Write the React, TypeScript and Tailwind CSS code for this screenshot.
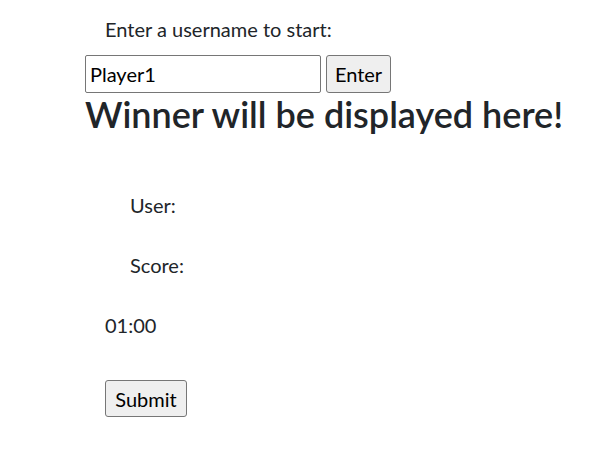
import React from "react";

export default function App() {
  const font = { fontFamily: 'Lato, "Noto Sans", sans-serif' };
  return (
    <div className="min-h-[473px] w-[608px] bg-white text-[#212529] pl-[85px]" style={font}>
      <p className="pl-[20px] pt-[14px] text-[20px] leading-[30px]">Enter a username to start:</p>
      <div className="mt-[11px] flex items-center gap-[5px]">
        <input
          defaultValue="Player1"
          className="h-[38px] w-[236px] rounded-[2px] border border-[#767676] bg-white px-[4px] text-[20px] text-black outline-none"
          style={font}
        />
        <button className="h-[38px] w-[65px] rounded-[3px] border border-[#767676] bg-[#efefef] text-[20px] text-black">
          Enter
        </button>
      </div>
      <h1 className="mt-[1px] whitespace-nowrap text-[36px] font-semibold leading-[40px]">Winner will be displayed here!</h1>
      <div className="pl-[45px]">
        <p className="mt-[56px] text-[20px] leading-[30px]">User:</p>
        <p className="mt-[30px] text-[20px] leading-[30px]">Score:</p>
      </div>
      <p className="mt-[30px] pl-[20px] text-[20px] leading-[30px]">01:00</p>
      <div className="mt-[40px] pl-[20px]">
        <button className="h-[37px] w-[82px] rounded-[3px] border border-[#767676] bg-[#efefef] text-[20px] text-black">
          Submit
        </button>
      </div>
    </div>
  );
}
